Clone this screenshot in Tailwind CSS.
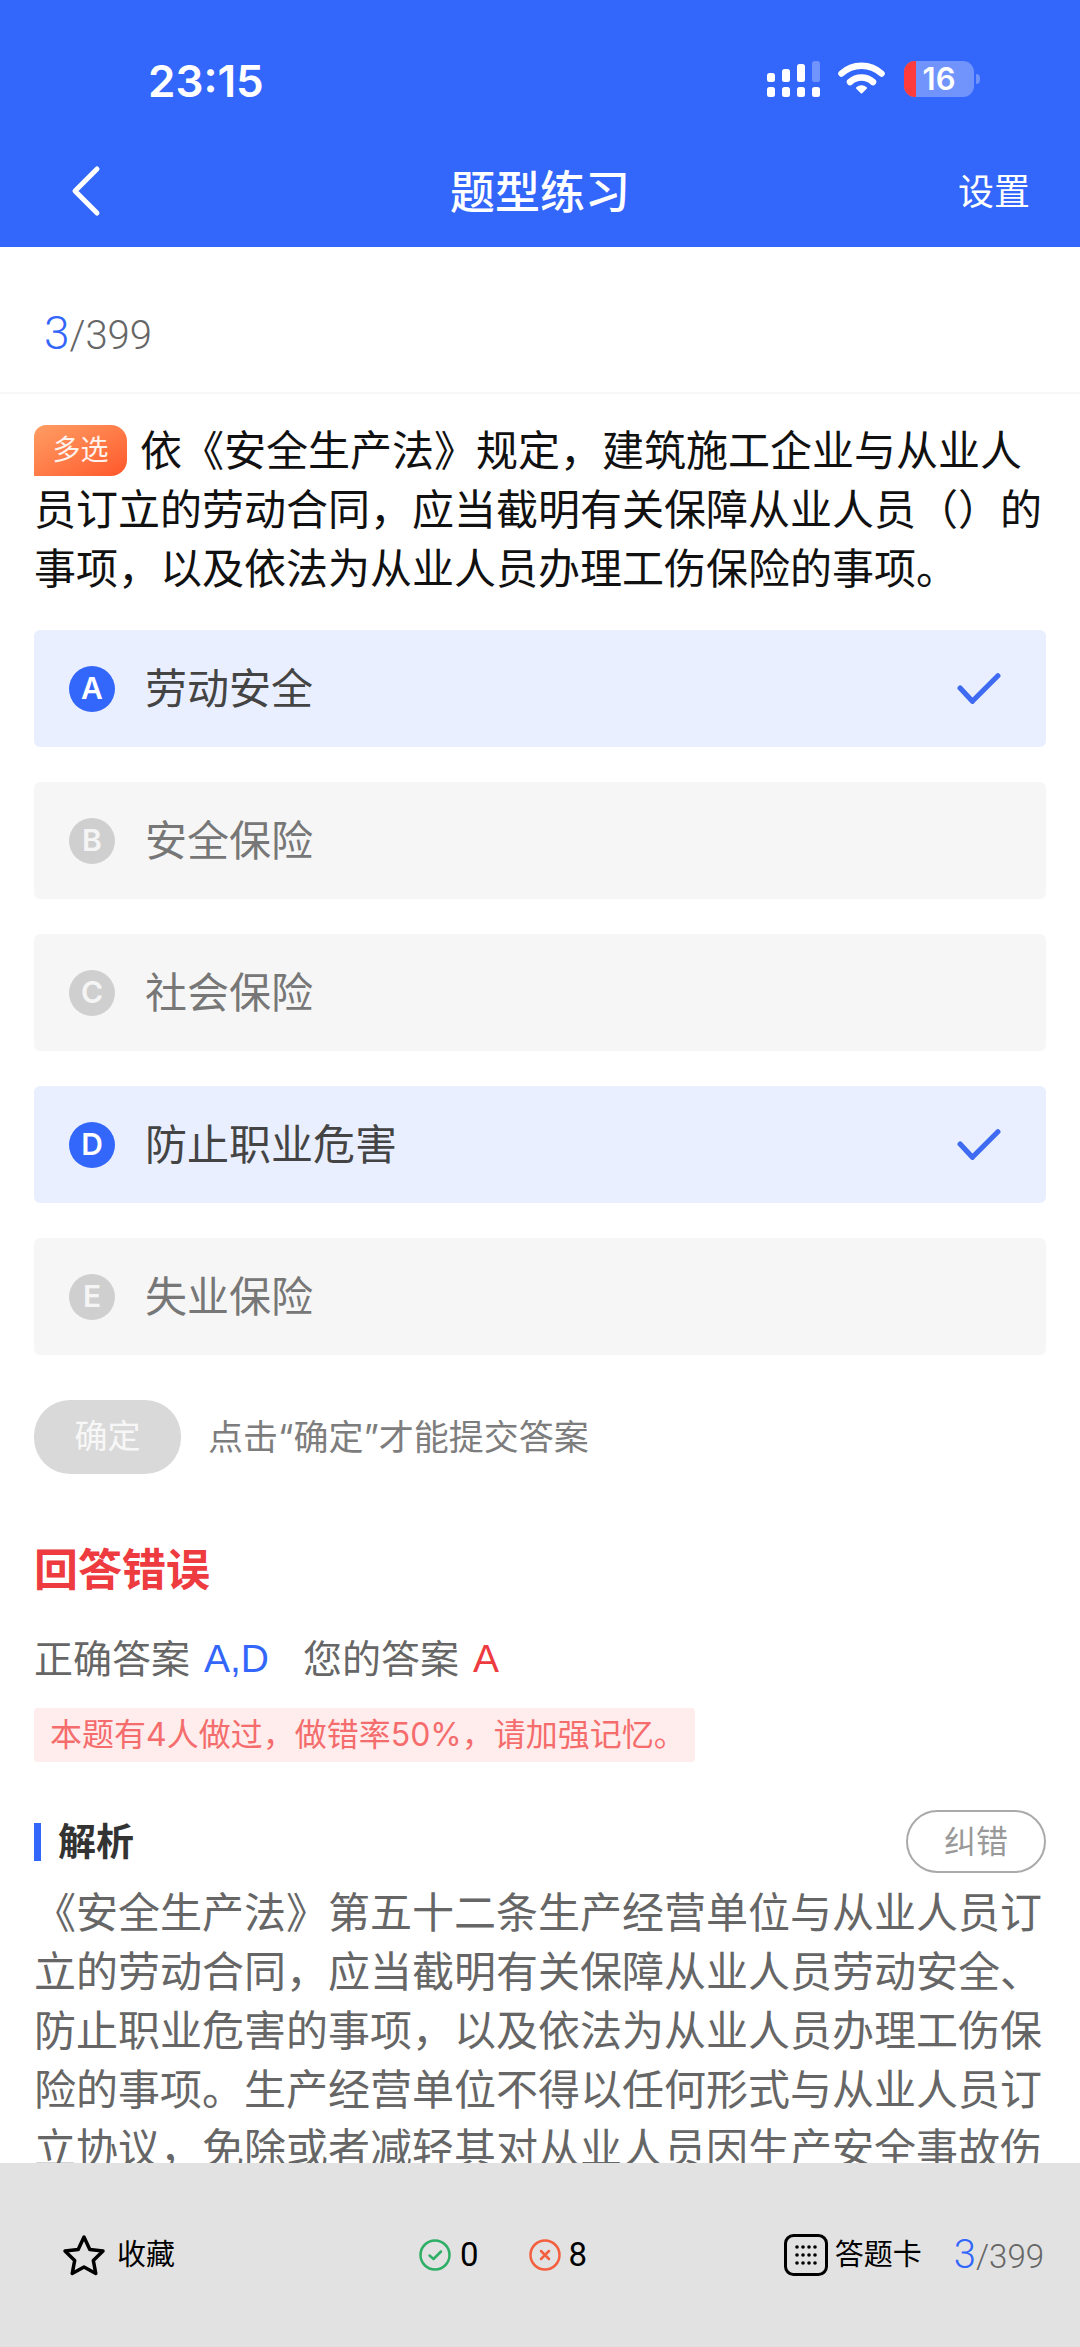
<!DOCTYPE html>
<html lang="zh-CN">
<head>
    <meta charset="UTF-8">
    <meta name="viewport" content="width=device-width, initial-scale=1.0">
    <title>题型练习</title>
    <script src="https://cdn.jsdelivr.net/npm/@tailwindcss/browser@4"></script>
</head>
<body class="font-['Inter','Noto_Sans_CJK_SC',sans-serif]">
<div class="flex flex-col w-[1080px] h-[2347px] overflow-hidden bg-white">

    <!-- Header -->
    <header class="h-[247px] shrink-0 bg-[#3366fa] text-white">
        <div class="flex justify-between items-start h-[135px] pt-[53px] pl-[148px] pr-[100px]">
            <span class="text-[44px] leading-[56px] font-semibold">23:15</span>
            <div class="flex items-start gap-[18px] pt-[8px]">
                <svg width="53" height="36" viewBox="0 0 53 36" fill="#fff">
                    <rect x="0" y="12" width="8" height="9" rx="2.5"/>
                    <rect x="15" y="8" width="8" height="13" rx="2.5"/>
                    <rect x="30" y="3" width="8" height="18" rx="2.5"/>
                    <rect x="45" y="0" width="8" height="21" rx="2.5" fill-opacity=".3"/>
                    <rect x="0" y="26" width="8" height="10" rx="2.5"/>
                    <rect x="15" y="26" width="8" height="10" rx="2.5"/>
                    <rect x="30" y="26" width="8" height="10" rx="2.5"/>
                    <rect x="45" y="26" width="8" height="10" rx="2.5"/>
                </svg>
                <svg width="47" height="34" viewBox="0 0 47 34" fill="none" stroke="#fff" stroke-width="6.500" stroke-linecap="round">
                    <path d="M3.500 12.500C14.500 2 32.500 2 43.500 12.500"/>
                    <path d="M12 21C18.500 15 28.500 15 35 21"/>
                    <path d="M19 27L23.500 31.500L28 27C25.500 24.800 21.500 24.800 19 27Z" fill="#fff" stroke-width="2" stroke-linejoin="round"/>
                </svg>
                <div class="flex items-center gap-[2px] ml-[1px]">
                    <div class="relative flex justify-center items-center w-[70px] h-[36px] rounded-[11px] overflow-hidden bg-white/30 text-[31px] font-semibold">
                        <span class="absolute left-0 top-0 w-[12px] h-full bg-[#ff3b3b]"></span>
                        16
                    </div>
                    <span class="w-[4px] h-[10px] rounded-r-full bg-white/30"></span>
                </div>
            </div>
        </div>
        <nav class="relative flex justify-center items-center h-[112px] pt-[2px]">
            <svg class="absolute left-[68px] top-[29px]" width="36" height="54" viewBox="0 0 36 54" fill="none" stroke="#fff" stroke-width="5" stroke-linecap="round" stroke-linejoin="round">
                <path d="M29 5L7 27L29 49"/>
            </svg>
            <h1 class="text-[45px] leading-none font-medium">题型练习</h1>
            <span class="absolute right-[50px] top-[39px] text-[36px] leading-none">设置</span>
        </nav>
    </header>

    <!-- Scrollable content -->
    <main class="flex-1 min-h-0 overflow-hidden">
        <div class="flex items-baseline h-[147px] pt-[56px] pl-[44px] border-b-2 border-[#f7f7f7] text-[#666] font-['Roboto',sans-serif] font-light">
            <span class="text-[46px] leading-[60px] text-[#3366fa]">3</span>
            <span class="text-[40px] leading-[60px]">/399</span>
        </div>

        <div class="px-[34px]">
            <p class="mt-[27px] text-[42px] leading-[59px] text-[#111]">
                <span class="inline-block align-[6px] w-[93px] h-[51px] mr-[13px] rounded-tl-[12px] rounded-r-[16px] bg-linear-to-br from-[#ff9d63] to-[#ff5529] text-center text-[28px] leading-[51px] text-white/90">多选</span>依《安全生产法》规定，建筑施工企业与从业人员订立的劳动合同，应当截明有关保障从业人员（）的事项，以及依法为从业人员办理工伤保险的事项。
            </p>

            <!-- Options -->
            <ul class="flex flex-col gap-[35px] mt-[32px]">
                <li class="flex items-center h-[117px] pl-[35px] pr-[45px] rounded-[6px] bg-[#e9effe]">
                    <span class="flex justify-center items-center w-[46px] h-[46px] rounded-full bg-[#3366fa] text-[30px] font-semibold text-white">A</span>
                    <span class="ml-[30px] flex-1 text-[42px] text-[#444]">劳动安全</span>
                    <svg width="44" height="34" viewBox="0 0 46 36" fill="none" stroke="#3f6af2" stroke-width="5.500" stroke-linecap="round" stroke-linejoin="round"><path d="M3 17L16 31L43 4"/></svg>
                </li>
                <li class="flex items-center h-[117px] pl-[35px] pr-[45px] rounded-[6px] bg-[#f6f6f6]">
                    <span class="flex justify-center items-center w-[46px] h-[46px] rounded-full bg-[#cfcfcf] text-[30px] font-semibold text-white/80">B</span>
                    <span class="ml-[30px] flex-1 text-[42px] text-[#777]">安全保险</span>
                </li>
                <li class="flex items-center h-[117px] pl-[35px] pr-[45px] rounded-[6px] bg-[#f6f6f6]">
                    <span class="flex justify-center items-center w-[46px] h-[46px] rounded-full bg-[#cfcfcf] text-[30px] font-semibold text-white/80">C</span>
                    <span class="ml-[30px] flex-1 text-[42px] text-[#777]">社会保险</span>
                </li>
                <li class="flex items-center h-[117px] pl-[35px] pr-[45px] rounded-[6px] bg-[#e9effe]">
                    <span class="flex justify-center items-center w-[46px] h-[46px] rounded-full bg-[#3366fa] text-[30px] font-semibold text-white">D</span>
                    <span class="ml-[30px] flex-1 text-[42px] text-[#444]">防止职业危害</span>
                    <svg width="44" height="34" viewBox="0 0 46 36" fill="none" stroke="#3f6af2" stroke-width="5.500" stroke-linecap="round" stroke-linejoin="round"><path d="M3 17L16 31L43 4"/></svg>
                </li>
                <li class="flex items-center h-[117px] pl-[35px] pr-[45px] rounded-[6px] bg-[#f6f6f6]">
                    <span class="flex justify-center items-center w-[46px] h-[46px] rounded-full bg-[#cfcfcf] text-[30px] font-semibold text-white/80">E</span>
                    <span class="ml-[30px] flex-1 text-[42px] text-[#777]">失业保险</span>
                </li>
            </ul>

            <div class="flex items-center mt-[45px]">
                <button class="w-[147px] h-[74px] rounded-[36px] bg-[#d9d9d9] text-[33px] text-white/80">确定</button>
                <span class="ml-[27px] text-[35px] text-[#7d7d7d]">点击“确定”才能提交答案</span>
            </div>

            <!-- Result -->
            <h2 class="mt-[66px] text-[44px] leading-[60px] font-bold text-[#ee3b3f]">回答错误</h2>
            <div class="flex items-center mt-[29px] h-[60px] text-[39px] text-[#666]">
                <span>正确答案</span>
                <span class="ml-[14px] text-[#3366fa] font-['Liberation_Sans',sans-serif]">A,D</span>
                <span class="ml-[34px]">您的答案</span>
                <span class="ml-[14px] text-[#ee3b3f] font-['Liberation_Sans',sans-serif]">A</span>
            </div>
            <div class="flex items-center w-[661px] h-[54px] mt-[19px] pl-[16px] rounded-[4px] bg-[#ffecec] text-[32px] text-[#f56c6c]">本题有4人做过，做错率50%，请加强记忆。</div>

            <!-- Analysis -->
            <div class="flex justify-between items-center mt-[48px]">
                <div class="flex items-center">
                    <span class="w-[7px] h-[38px] bg-[#3366fa]"></span>
                    <span class="ml-[17px] text-[38px] font-bold text-[#333]">解析</span>
                </div>
                <button class="w-[140px] h-[63px] rounded-full border-2 border-[#aaa] text-[32px] text-[#999]">纠错</button>
            </div>
            <p class="mt-[10px] text-[42px] leading-[59px] text-[#666]">《安全生产法》第五十二条生产经营单位与从业人员订立的劳动合同，应当截明有关保障从业人员劳动安全、防止职业危害的事项，以及依法为从业人员办理工伤保险的事项。生产经营单位不得以任何形式与从业人员订立协议，免除或者减轻其对从业人员因生产安全事故伤亡依法应承担的责任。</p>
        </div>
    </main>

    <!-- Bottom bar -->
    <footer class="flex justify-between items-center h-[184px] shrink-0 pl-[62px] pr-[36px] bg-[#e2e2e2] text-black">
        <div class="flex items-center w-[200px]">
            <svg width="44" height="42" viewBox="0 0 44 42" fill="none" stroke="#000" stroke-width="3.500" stroke-linejoin="round">
                <path d="M22 3L27.800 15.500L41 17L31.300 26.400L33.800 39.500L22 33L10.200 39.500L12.700 26.400L3 17L16.200 15.500Z"/>
            </svg>
            <span class="ml-[11px] text-[29px]">收藏</span>
        </div>
        <div class="flex items-center font-['Roboto',sans-serif]">
            <svg width="32" height="32" viewBox="0 0 32 32" fill="none" stroke="#2fae66" stroke-width="2.500" stroke-linecap="round" stroke-linejoin="round">
                <circle cx="16" cy="16" r="14.500"/>
                <path d="M10.500 16.500L14.500 20L22 12.500"/>
            </svg>
            <span class="ml-[9px] text-[33px]">0</span>
            <svg class="ml-[50px]" width="32" height="32" viewBox="0 0 32 32" fill="none" stroke="#f4603f" stroke-width="2.500" stroke-linecap="round">
                <circle cx="16" cy="16" r="14.500"/>
                <path d="M12 12L20 20M20 12L12 20"/>
            </svg>
            <span class="ml-[8px] text-[33px]">8</span>
        </div>
        <div class="flex items-center w-[300px] justify-end">
            <svg width="44" height="42" viewBox="0 0 44 42" fill="#000">
                <rect x="1.500" y="1.500" width="41" height="39" rx="8" fill="none" stroke="#000" stroke-width="3"/>
                <circle cx="13" cy="13" r="1.800"/><circle cx="19" cy="13" r="1.800"/><circle cx="25" cy="13" r="1.800"/><circle cx="31" cy="13" r="1.800"/>
                <circle cx="13" cy="21" r="1.800"/><circle cx="19" cy="21" r="1.800"/><circle cx="25" cy="21" r="1.800"/><circle cx="31" cy="21" r="1.800"/>
                <circle cx="13" cy="29" r="1.800"/><circle cx="19" cy="29" r="1.800"/><circle cx="25" cy="29" r="1.800"/><circle cx="31" cy="29" r="1.800"/>
            </svg>
            <span class="ml-[7px] text-[29px]">答题卡</span>
            <div class="flex items-baseline ml-[32px] text-[#666] font-['Roboto',sans-serif] font-light">
                <span class="text-[40px] leading-none text-[#3366fa]">3</span>
                <span class="text-[33px] leading-none">/399</span>
            </div>
        </div>
    </footer>
</div>
</body>
</html>
